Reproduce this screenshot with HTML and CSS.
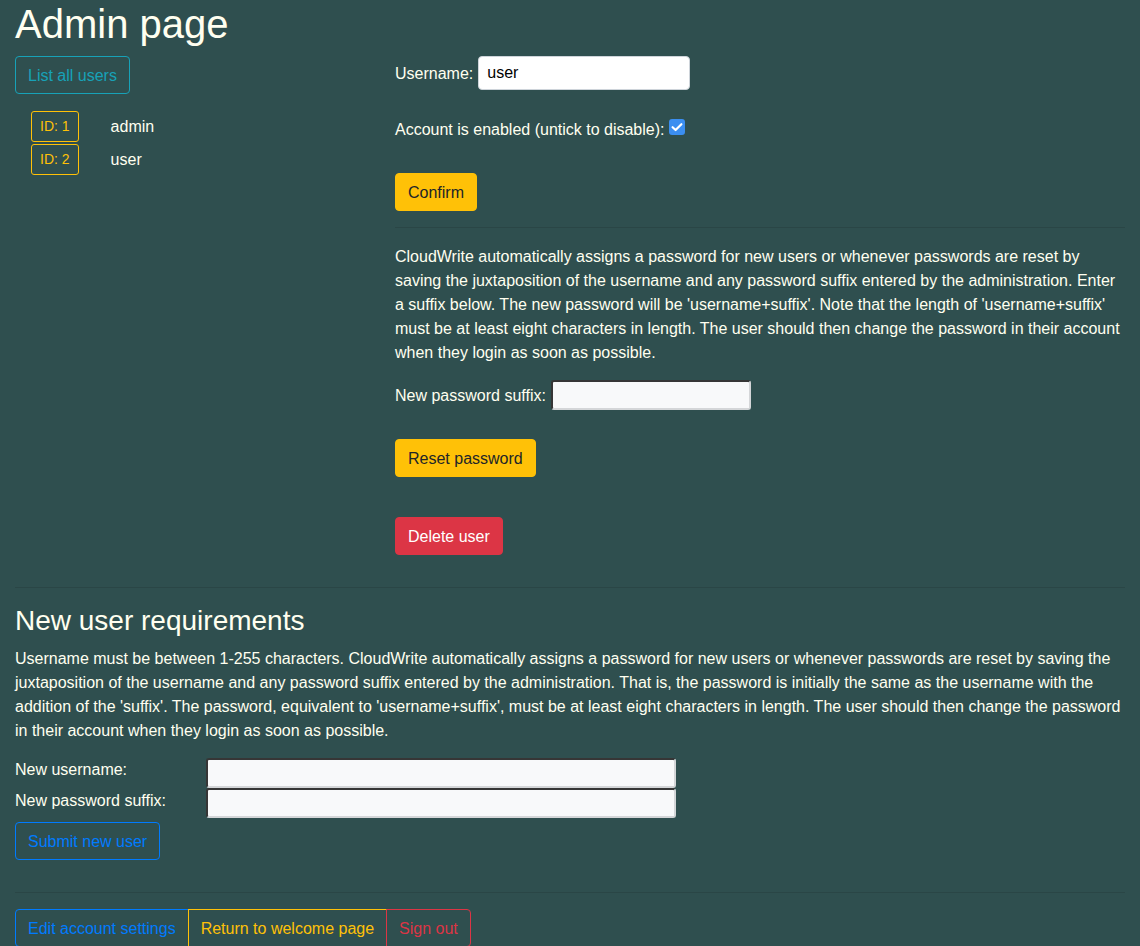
FILE: index.html
```html
<!DOCTYPE html>
<html lang="en">
<head>
<meta charset="utf-8">
<title>Admin page</title>
<link rel="stylesheet" href="styles.css">
</head>
<body>
<div class="page">
  <h1 class="title">Admin page</h1>
  <div class="row">
    <div class="col-left">
      <button class="btn btn-outline-info">List all users</button>
      <div class="user-list">
        <div class="user-row"><button class="btn btn-sm btn-outline-warning">ID: 1</button><span class="user-name">admin</span></div>
        <div class="user-row"><button class="btn btn-sm btn-outline-warning">ID: 2</button><span class="user-name">user</span></div>
      </div>
    </div>
    <div class="col-right">
      <div class="field-row">
        <label class="field-label">Username:</label>
        <input class="input-white" type="text" value="user">
      </div>
      <div class="check-row">
        <span>Account is enabled (untick to disable):</span>
        <span class="checkbox"><svg width="16" height="16" viewBox="0 0 16 16"><rect x="0" y="0" width="16" height="16" rx="3" fill="#3b8ef0"/><path d="M3.6 8.2 L6.6 11 L12.4 5.2" fill="none" stroke="#fff" stroke-width="2.2" stroke-linecap="round" stroke-linejoin="round"/></svg></span>
      </div>
      <button class="btn btn-warning btn-confirm">Confirm</button>
      <hr class="rule">
      <p class="text">CloudWrite automatically assigns a password for new users or whenever passwords are reset by saving the juxtaposition of the username and any password suffix entered by the administration. Enter a suffix below. The new password will be 'username+suffix'. Note that the length of 'username+suffix' must be at least eight characters in length. The user should then change the password in their account when they login as soon as possible.</p>
      <div class="field-row">
        <label class="field-label">New password suffix:</label>
        <input class="input-light input-suffix" type="text">
      </div>
      <button class="btn btn-warning btn-reset">Reset password</button>
      <button class="btn btn-danger btn-delete">Delete user</button>
    </div>
  </div>
  <hr class="rule">
  <h3 class="subtitle">New user requirements</h3>
  <p class="text">Username must be between 1-255 characters. CloudWrite automatically assigns a password for new users or whenever passwords are reset by saving the juxtaposition of the username and any password suffix entered by the administration. That is, the password is initially the same as the username with the addition of the 'suffix'. The password, equivalent to 'username+suffix', must be at least eight characters in length. The user should then change the password in their account when they login as soon as possible.</p>
  <div class="new-user-form">
    <div class="form-grid">
      <label class="grid-label">New username:</label>
      <input class="input-light input-wide" type="text">
      <label class="grid-label">New password suffix:</label>
      <input class="input-light input-wide" type="text">
    </div>
    <button class="btn btn-outline-primary">Submit new user</button>
  </div>
  <hr class="rule">
  <div class="btn-group">
    <button class="btn btn-outline-primary">Edit account settings</button>
    <button class="btn btn-outline-warning">Return to welcome page</button>
    <button class="btn btn-outline-danger">Sign out</button>
  </div>
</div>
</body>
</html>
```

FILE: styles.css
```css
html, body {
  margin: 0;
  padding: 0;
  background: #2f4f4f;
}
body {
  font-family: "Liberation Sans", Arial, sans-serif;
  font-size: 16px;
  line-height: 24px;
  color: #fffff0;
}
.page {
  padding: 0 15px 40px 15px;
}
.title {
  margin: 0 0 8px 0;
  font-size: 40px;
  font-weight: 400;
  line-height: 48px;
}
.row {
  display: flex;
}
.col-left {
  width: 365px;
  flex: none;
}
.col-right {
  flex: 1;
  padding-left: 15px;
  display: flex;
  flex-direction: column;
  align-items: flex-start;
  padding-bottom: 16px;
}
.btn {
  font-family: inherit;
  font-size: 16px;
  line-height: 24px;
  padding: 7px 12px 5px 12px;
  border: 1px solid transparent;
  border-radius: 4px;
  background: transparent;
  cursor: pointer;
  display: inline-block;
}
.btn-sm {
  font-size: 14px;
  line-height: 21px;
  padding: 4px 8px;
  border-radius: 3px;
}
.btn-outline-info { color: #17a2b8; border-color: #17a2b8; }
.btn-outline-warning { color: #ffc107; border-color: #ffc107; }
.btn-outline-primary { color: #007bff; border-color: #007bff; }
.btn-outline-danger { color: #dc3545; border-color: #dc3545; }
.btn-warning { background: #ffc107; border-color: #ffc107; color: #212529; }
.btn-danger { background: #dc3545; border-color: #dc3545; color: #fff; }

.user-list {
  margin-top: 17px;
  padding-left: 16px;
  display: flex;
  flex-direction: column;
  gap: 2px;
}
.user-row {
  display: flex;
  align-items: center;
}
.user-name {
  margin-left: 32px;
}

.field-row {
  display: flex;
  align-items: center;
}
.field-label {
  margin-right: 5px;
  padding-top: 1px;
}
.input-white {
  width: 212px;
  height: 34px;
  box-sizing: border-box;
  background: #fff;
  border: 1px solid #ced4da;
  border-radius: 4px;
  padding: 4px 8px;
  font-family: inherit;
  font-size: 16px;
  color: #000;
}
.input-light {
  box-sizing: border-box;
  height: 30px;
  background: #f8f9fa;
  border: 2px inset #8f8f8f;
  border-top-color: #8a8a8a;
  border-left-color: #8a8a8a;
  border-right-color: #d4d6d8;
  border-bottom-color: #d4d6d8;
  border-radius: 3px;
  padding: 2px 4px;
  font-family: inherit;
  font-size: 16px;
}
.input-suffix {
  width: 200px;
}
.check-row {
  margin-top: 28px;
  display: flex;
  align-items: flex-start;
}
.checkbox {
  display: inline-flex;
  margin-left: 5px;
  margin-top: 1px;
}
.btn-confirm {
  margin-top: 31px;
}
.rule {
  align-self: stretch;
  width: auto;
  margin: 16px 0;
  border: 0;
  border-top: 1px solid rgba(0, 0, 0, 0.1);
  height: 0;
}
.text {
  margin: 0 0 15px 0;
  padding-top: 1px;
}
.btn-reset {
  margin-top: 29px;
}
.btn-delete {
  margin-top: 40px;
}
.subtitle {
  margin: 0 0 8px 0;
  font-size: 28px;
  font-weight: 400;
  line-height: 34px;
}
.new-user-form {
  padding-bottom: 16px;
}
.form-grid {
  display: grid;
  grid-template-columns: 191px 470px;
  align-items: center;
  margin-bottom: 4px;
}
.grid-label {
  align-self: start;
}
.grid-label + .input-light + .grid-label {
  padding-top: 1px;
}
.input-wide {
  width: 470px;
}
.btn-group {
  display: flex;
}
.btn-group .btn {
  border-radius: 0;
}
.btn-group .btn:first-child {
  border-radius: 4px 0 0 4px;
}
.btn-group .btn:last-child {
  border-radius: 0 4px 4px 0;
}
.btn-group .btn + .btn {
  margin-left: -1px;
}
```
